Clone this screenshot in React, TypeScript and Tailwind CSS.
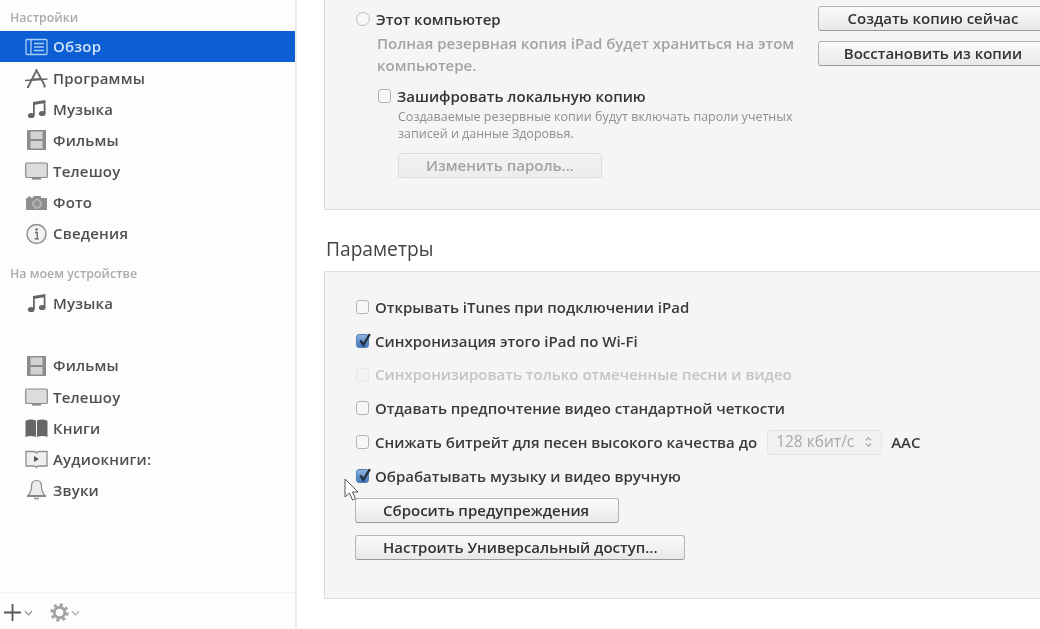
import React from "react";

const iconCls = "w-[26px] h-[22px] shrink-0";

const OverviewIcon = () => (
  <svg viewBox="0 0 26 22" className={iconCls} fill="none" stroke="#a9cdf5" strokeWidth="1.3">
    <rect x="2" y="3.500" width="21" height="15" rx="1" />
    <path d="M7 3.500v15M10 7.500h10M10 11h10M10 14.500h10" />
  </svg>
);
const AppsIcon = () => (
  <svg viewBox="0 0 26 22" className={iconCls} fill="none" stroke="#666" strokeWidth="1.800">
    <path d="M4 20 13 2.500M12 2.500 21 19" />
    <path d="M1 13.500 23.500 12" strokeWidth="1.300" />
    <path d="M8 12.500 18 12" strokeWidth="2" stroke="#666" />
    <path d="M3 20h2M19.500 19.500h2" strokeWidth="2" />
  </svg>
);
const MusicIcon = () => (
  <svg viewBox="0 0 26 22" className={iconCls} fill="#666">
    <path d="M9 4 21.500 2v3L10.800 6.800V17H9zM19.700 4h1.800v11.500h-1.800z" />
    <ellipse cx="7.200" cy="17.500" rx="3.300" ry="2.600" />
    <ellipse cx="18.200" cy="15.500" rx="3.300" ry="2.600" />
  </svg>
);
const FilmIcon = () => (
  <svg viewBox="0 0 26 22" className={iconCls}>
    <rect x="3" y="1" width="19" height="20" fill="#8c8c8c" />
    <rect x="6.500" y="2.500" width="12" height="7.500" fill="#d2d2d2" />
    <rect x="6.500" y="12" width="12" height="7.500" fill="#d2d2d2" />
  </svg>
);
const TvIcon = () => (
  <svg viewBox="0 0 26 22" className={iconCls}>
    <rect x="1.700" y="3" width="21.600" height="14.500" rx="1" fill="#dcdcdc" stroke="#8a8a8a" strokeWidth="1.200" />
    <rect x="8" y="18" width="9" height="1.600" fill="#8a8a8a" />
  </svg>
);
const CameraIcon = () => (
  <svg viewBox="0 0 26 22" className={iconCls}>
    <path d="M2 6h2V4.500h3V6h1.500l1-2h7l1 2H23v12H2z" fill="#8e8e8e" />
    <circle cx="13" cy="11.800" r="4.300" fill="#a0a0a0" stroke="#c8c8c8" strokeWidth="1" />
    <circle cx="13" cy="11.800" r="2" fill="#8e8e8e" />
  </svg>
);
const InfoIcon = () => (
  <svg viewBox="0 0 26 22" className={iconCls} fill="none">
    <circle cx="12.500" cy="11" r="9.500" fill="#f2f2f2" stroke="#8a8a8a" strokeWidth="1.400" />
    <circle cx="12.500" cy="6.500" r="1.200" fill="#666" />
    <path d="M11 9.500h2.200v6M10.500 15.800h4.500" stroke="#666" strokeWidth="1.300" />
  </svg>
);
const BookIcon = () => (
  <svg viewBox="0 0 26 22" className={iconCls} fill="#666">
    <path d="M1.500 4c3-2 7-2 10.500-.5V20c-3.500-1.500-7.500-1.500-10.500 0zM13 3.500c3.500-1.500 7.500-1.500 10.500.5v16c-3-1.500-7-1.500-10.500 0z" />
  </svg>
);
const AudiobookIcon = () => (
  <svg viewBox="0 0 26 22" className={iconCls} fill="none" stroke="#8e8e8e" strokeWidth="1.300">
    <path d="M2 3.500h7.500c1.500 0 2.500.5 3 1.500.5-1 1.500-1.500 3-1.500H23V18h-7.500c-1.500 0-2.500.5-3 1.500-.5-1-1.500-1.500-3-1.500H2z" fill="#efefef" />
    <path d="M10 8v6l5-3z" fill="#555" stroke="none" />
  </svg>
);
const BellIcon = () => (
  <svg viewBox="0 0 26 22" className={iconCls} fill="#ececec" stroke="#8a8a8a" strokeWidth="1.200">
    <path d="M12.500 1.500c-3.500 0-5 2.500-5 6 0 4-1 6.500-3.500 9h17c-2.500-2.500-3.500-5-3.500-9 0-3.500-1.500-6-5-6z" />
    <path d="M3 17.500h19M10.500 18.500c.5 2 3.500 2 4 0" />
  </svg>
);

const SideItem = ({ icon, label, active }: { icon: React.ReactNode; label: string; active?: boolean }) => (
  <div className={`h-[31.200px] flex items-center gap-[3px] pl-[24px] text-[15px] font-semibold tracking-[0.2px] ${active ? "bg-[#0b5fd3] text-[#cfe3fb]" : "text-[#505050]"}`}>
    {icon}
    <span>{label}</span>
  </div>
);

const Check = ({ checked, disabled }: { checked?: boolean; disabled?: boolean }) => (
  <div className={`relative w-[13px] h-[14px] shrink-0 rounded-[3px] border ${disabled ? "border-[#e6e6e6] bg-[#f3f3f3]" : checked ? "border-[#4f7fb8] bg-gradient-to-b from-[#8fb3dc] to-[#3f77bb]" : "border-[#b5b5b5] bg-[#f7f7f7]"}`}>
    {checked && (
      <svg viewBox="0 0 14 14" className="absolute left-0 -top-[2px] w-[15px] h-[15px]" fill="none" stroke="#23303f" strokeWidth="2.200">
        <path d="M3 7l3 4 6-10" />
      </svg>
    )}
  </div>
);

const Btn = ({ children, className, disabled }: { children: React.ReactNode; className?: string; disabled?: boolean }) => (
  <div className={`flex items-center justify-center rounded-[3px] border text-[15px] font-semibold bg-gradient-to-b ${disabled ? "border-[#dcdcdc] from-[#f3f3f3] to-[#ececec] text-[#a2a2a2]" : "border-[#b4b4b4] border-b-[#999] from-[#fbfbfb] to-[#e8e8e8] text-[#333]"} ${className ?? ""}`}>
    {children}
  </div>
);

const OptRow = ({ label, checked, disabled, children }: { label: string; checked?: boolean; disabled?: boolean; children?: React.ReactNode }) => (
  <div className={`h-[33.7px] flex items-center gap-[6px] text-[15px] font-semibold whitespace-nowrap ${disabled ? "text-[#c4c4c4]" : "text-[#3a3a3a]"}`}>
    <Check checked={checked} disabled={disabled} />
    <span>{label}</span>
    {children}
  </div>
);

export default function App() {
  return (
    <div className="w-[1040px] h-[629px] flex overflow-hidden bg-white blur-[0.6px]" style={{ fontFamily: '"Open Sans", "Noto Sans", sans-serif' }}>
      <aside className="w-[297px] shrink-0 flex flex-col border-r-2 border-[#ececec] bg-[#fdfdfd]">
        <div className="h-[31px] pt-[10px] pl-[10px] text-[12.400px] leading-[16px] font-semibold text-[#ababab]">Настройки</div>
        <SideItem active icon={<OverviewIcon />} label="Обзор" />
        <SideItem icon={<AppsIcon />} label="Программы" />
        <SideItem icon={<MusicIcon />} label="Музыка" />
        <SideItem icon={<FilmIcon />} label="Фильмы" />
        <SideItem icon={<TvIcon />} label="Телешоу" />
        <SideItem icon={<CameraIcon />} label="Фото" />
        <SideItem icon={<InfoIcon />} label="Сведения" />
        <div className="mt-[17px] h-[21.500px] pl-[10px] text-[12.400px] leading-[16px] font-semibold text-[#ababab]">На моем устройстве</div>
        <SideItem icon={<MusicIcon />} label="Музыка" />
        <div className="h-[31px]" />
        <SideItem icon={<FilmIcon />} label="Фильмы" />
        <SideItem icon={<TvIcon />} label="Телешоу" />
        <SideItem icon={<BookIcon />} label="Книги" />
        <SideItem icon={<AudiobookIcon />} label="Аудиокниги:" />
        <SideItem icon={<BellIcon />} label="Звуки" />
        <div className="mt-auto h-[37px] border-t border-[#f3f3f3] flex items-center pl-[3px] pt-[3px]">
          <svg viewBox="0 0 18 18" className="w-[19px] h-[19px]" fill="none" stroke="#555" strokeWidth="1.700"><path d="M9 1v16M1 9h16" /></svg>
          <svg viewBox="0 0 10 6" className="w-[9px] h-[6px] ml-[2px]" fill="none" stroke="#888" strokeWidth="1.300"><path d="M1 1l4 4 4-4" /></svg>
          <svg viewBox="0 0 20 20" className="w-[19px] h-[19px] ml-[17px]" fill="none">
            <circle cx="10" cy="10" r="5.500" stroke="#a2a2a2" strokeWidth="3" />
            <circle cx="10" cy="10" r="8.200" stroke="#a2a2a2" strokeWidth="3" strokeDasharray="3.200 3.240" />
          </svg>
          <svg viewBox="0 0 10 6" className="w-[9px] h-[6px] ml-[2px]" fill="none" stroke="#aaa" strokeWidth="1.300"><path d="M1 1l4 4 4-4" /></svg>
        </div>
      </aside>

      <main className="flex-1 min-w-0 pl-[27px] -mr-[30px]">
        <section className="h-[210px] flex justify-between border-l border-b border-[#dedede] bg-[#f5f5f5] pl-[31px] pt-[6px] pr-[10px]">
          <div className="w-[450px]">
            <div className="h-[26px] flex items-center gap-[6px] text-[15px] font-semibold text-[#333]">
              <div className="w-[14px] h-[14px] rounded-full border border-[#bdbdbd] bg-[#f8f8f8]" />
              <span>Этот компьютер</span>
            </div>
            <p className="pl-[21px] text-[15px] leading-[22px] font-semibold text-[#a3a3a3]">Полная резервная копия iPad будет храниться на этом компьютере.</p>
            <div className="mt-[8px] ml-[22px]">
              <div className="h-[24px] flex items-center gap-[6px] text-[15px] font-semibold text-[#333]">
                <Check />
                <span>Зашифровать локальную копию</span>
              </div>
              <p className="pl-[20px] text-[12.500px] leading-[17px] text-[#8f8f8f] whitespace-nowrap">Создаваемые резервные копии будут включать пароли учетных<br />записей и данные Здоровья.</p>
              <Btn disabled className="ml-[20px] mt-[11px] w-[204px] h-[25px]">Изменить пароль...</Btn>
            </div>
          </div>
          <div className="w-[242px] flex flex-col gap-[10px]">
            <Btn className="h-[25px] pr-[12px]">Создать копию сейчас</Btn>
            <Btn className="h-[25px] pr-[12px]">Восстановить из копии</Btn>
          </div>
        </section>

        <h2 className="h-[61px] pt-[26px] pl-[2px] text-[19.200px] leading-[26px] text-[#444]">Параметры</h2>

        <section className="h-[328px] border border-[#dedede] bg-[#f5f5f5] pl-[31px] pt-[18.500px]">
          <OptRow label="Открывать iTunes при подключении iPad" />
          <OptRow label="Синхронизация этого iPad по Wi-Fi" checked />
          <OptRow label="Синхронизировать только отмеченные песни и видео" disabled />
          <OptRow label="Отдавать предпочтение видео стандартной четкости" />
          <OptRow label="Снижать битрейт для песен высокого качества до">
            <div className="ml-[4px] w-[115px] h-[25px] flex items-center justify-between pl-[8px] pr-[9px] rounded-[3px] border border-[#e6e6e6] bg-[#f1f1f1] text-[#a8a8a8] text-[15.500px] font-normal">
              <span>128 кбит/с</span>
              <svg viewBox="0 0 8 14" className="w-[7px] h-[12px]" fill="none" stroke="#999" strokeWidth="1.200"><path d="M1 5l3-3 3 3M1 9l3 3 3-3" /></svg>
            </div>
            <span className="ml-[3px]">AAC</span>
          </OptRow>
          <div className="relative">
            <OptRow label="Обрабатывать музыку и видео вручную" checked />
            <svg viewBox="0 0 16 24" className="absolute -left-[12px] top-[19px] w-[16px] h-[24px]" fill="#fff" stroke="#555" strokeWidth="1">
              <path d="M1 1v18l4.500-4 3 7 3-1.300-3-6.700H14z" />
            </svg>
          </div>
          <Btn className="mt-[5px] -ml-[1px] w-[264px] h-[25px] justify-start pl-[27px]">Сбросить предупреждения</Btn>
          <Btn className="mt-[12px] -ml-[1px] w-[330px] h-[25px] justify-start pl-[27px]">Настроить Универсальный доступ...</Btn>
        </section>
      </main>
    </div>
  );
}
